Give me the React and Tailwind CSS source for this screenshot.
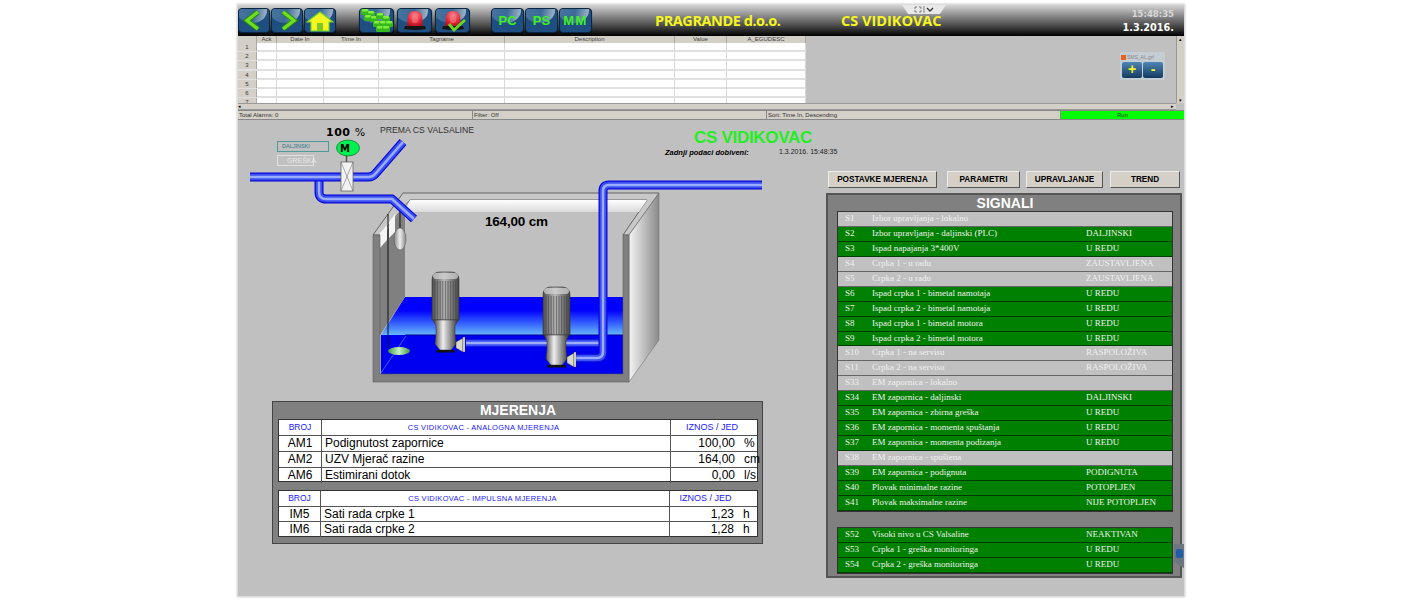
import React from "react";

const SERIF = { fontFamily: '"Liberation Serif", serif' };

function ToolBtn({ w = "w-[33px]", children }) {
  return (
    <div className={`relative ${w} h-[25px] shrink-0 rounded-[4px] border border-[#0c2540] bg-[#1f4f80] flex items-center justify-center overflow-hidden shadow-[0_1px_1px_rgba(0,0,0,0.8)]`}>
      <div className="absolute left-[-6%] right-[8%] top-[-10px] h-[24px] rounded-b-[60%] bg-[linear-gradient(100deg,#4a76a0_0%,#3a6a98_55%,#aebecb_100%)]" />
      <div className="relative flex items-center justify-center">{children}</div>
    </div>
  );
}

function TextBtn({ children, tracking }) {
  return (
    <ToolBtn>
      <span className={`text-[#3cf01e] text-[13px] font-bold whitespace-nowrap ${tracking}`} style={{ fontFamily: '"Liberation Sans", sans-serif' }}>{children}</span>
    </ToolBtn>
  );
}

function Chevron({ d }) {
  return (
    <svg width="24" height="23" viewBox="0 0 24 23">
      <path d={d} fill="none" stroke="#2c8a12" strokeWidth="5.2" />
      <path d={d} fill="none" stroke="#6fe020" strokeWidth="3.2" />
    </svg>
  );
}

function Siren({ id, check }) {
  return (
    <svg width="26" height="23" viewBox="0 0 26 23">
      <defs>
        <radialGradient id={id} cx="50%" cy="30%" r="75%">
          <stop offset="0" stopColor="#f88c94" />
          <stop offset="0.6" stopColor="#e6283a" />
          <stop offset="1" stopColor="#a81220" />
        </radialGradient>
      </defs>
      <path d="M5 17 L6 7 Q7 2 13 2 Q19 2 20 7 L21 17 Z" fill={`url(#${id})`} />
      <path d="M3 17 H23 L24 20 Q13 22 2 20 Z" fill="#141414" />
      <rect x="10" y="6" width="6" height="8" rx="2" fill="#f47a80" opacity="0.55" />
      {check && <path d="M9 15 L14 21 L25 11" fill="none" stroke="#63d820" strokeWidth="2.8" />}
    </svg>
  );
}

function Bricks() {
  const pts = [[1, 0], [7, 2], [4, 6], [10, 7], [16, 4], [22, 7], [13, 12], [19, 12], [25, 12], [16, 17], [22, 17]];
  return (
    <svg width="33" height="24" viewBox="0 0 33 24">
      {pts.map(([x, y], i) => (
        <g key={i}>
          <rect x={x} y={y} width="8" height="6" rx="1.5" fill="#36b81c" />
          <rect x={x + 1} y={y} width="6" height="2.5" rx="1" fill="#7fee3e" />
        </g>
      ))}
    </svg>
  );
}

function Cell() {
  return <div className="border-r border-[#d8d8d8]" />;
}

const GRID = "grid grid-cols-[19px_20px_47px_55px_126px_170px_52px_79px]";

function AlarmGrid() {
  const heads = ["", "Ack", "Date In", "Time In", "Tagname", "Description", "Value", "A_EGUDESC"];
  return (
    <div className="w-[568px] h-[67px] overflow-hidden text-[6px] text-[#444]">
      <div className={`${GRID} h-[7px] bg-[#d4d0c8] leading-[7px] text-center`}>
        {heads.map((h, i) => <div key={i} className="border-r border-[#aaa8a0]">{h}</div>)}
      </div>
      {[1, 2, 3, 4, 5, 6, 7].map((n) => (
        <div key={n} className={`${GRID} h-[9.2px] bg-white border-b-2 border-[#e0e0e0] leading-[8px] text-center`}>
          <div className="bg-[#d4d0c8] text-[#333] border-r border-[#aaa8a0]">{n}</div>
          {[0, 1, 2, 3, 4, 5, 6].map((c) => <Cell key={c} />)}
        </div>
      ))}
    </div>
  );
}

function Pipe({ d }) {
  return (
    <g fill="none" strokeLinejoin="round">
      <path d={d} stroke="#0808d8" strokeWidth="9" />
      <path d={d} stroke="#3a50f4" strokeWidth="6.5" />
      <path d={d} stroke="#9cacff" strokeWidth="2.5" />
    </g>
  );
}

function Pump({ x, y }) {
  const ribs = [];
  for (let i = 3; i < 26; i += 2.6) ribs.push(<line key={i} x1={x + i} x2={x + i} y1={y + 9} y2={y + 48} stroke="#444" strokeWidth="0.6" />);
  return (
    <g>
      <path d={`M${x} ${y + 8} Q${x} ${y} ${x + 8} ${y} H${x + 19} Q${x + 27} ${y} ${x + 27} ${y + 8} V${y + 48} H${x} Z`} fill="url(#steel)" stroke="#333" strokeWidth="0.6" />
      <rect x={x + 1} y={y + 1} width="25" height="6" rx="3" fill="#d0d0d0" opacity="0.75" />
      {ribs}
      <path d={`M${x + 1} ${y + 48} H${x + 26} L${x + 23} ${y + 54} V${y + 62} L${x + 24} ${y + 72} L${x + 19} ${y + 78} H${x + 8} L${x + 3} ${y + 72} L${x + 4} ${y + 62} V${y + 54} Z`} fill="url(#steel2)" stroke="#333" strokeWidth="0.5" />
      <rect x={x + 4} y={y + 78} width="19" height="2.5" rx="1" fill="#111" />
      <path d={`M${x + 24} ${y + 70} L${x + 31} ${y + 66} V${y + 80} L${x + 24} ${y + 76} Z`} fill="#d8d8d0" stroke="#333" strokeWidth="0.5" />
      <rect x={x + 31} y={y + 65} width="2" height="15" fill="#f0f0e8" stroke="#333" strokeWidth="0.4" />
    </g>
  );
}

function Diagram() {
  return (
    <svg className="block absolute inset-0" width="568" height="281" viewBox="238 120 568 281">
      <defs>
        <linearGradient id="steel" x1="0" x2="1" y1="0" y2="0">
          <stop offset="0" stopColor="#4c4c4c" />
          <stop offset="0.45" stopColor="#b8b8b8" />
          <stop offset="1" stopColor="#444" />
        </linearGradient>
        <linearGradient id="steel2" x1="0" x2="1" y1="0" y2="0">
          <stop offset="0" stopColor="#333" />
          <stop offset="0.4" stopColor="#eeeeee" />
          <stop offset="1" stopColor="#333" />
        </linearGradient>
        <linearGradient id="water" x1="0" x2="0" y1="0" y2="1">
          <stop offset="0" stopColor="#0000ff" />
          <stop offset="0.35" stopColor="#0000ff" />
          <stop offset="1" stopColor="#66b8ff" />
        </linearGradient>
        <linearGradient id="side" x1="0" x2="1" y1="0" y2="0">
          <stop offset="0" stopColor="#f4f4f4" />
          <stop offset="1" stopColor="#8a8a8a" />
        </linearGradient>
        <linearGradient id="band" x1="0" x2="0" y1="0" y2="1">
          <stop offset="0" stopColor="#ffffff" />
          <stop offset="1" stopColor="#dadada" />
        </linearGradient>
        <linearGradient id="floatG" x1="0" x2="1" y1="0" y2="0">
          <stop offset="0" stopColor="#3f9d3f" />
          <stop offset="0.5" stopColor="#c8eec8" />
          <stop offset="1" stopColor="#3f9d3f" />
        </linearGradient>
        <linearGradient id="ballG" x1="0" x2="1" y1="0" y2="0">
          <stop offset="0" stopColor="#888" />
          <stop offset="0.5" stopColor="#eee" />
          <stop offset="1" stopColor="#888" />
        </linearGradient>
      </defs>

      {/* tank */}
      <polygon points="373,235 403,193 659,193 629,235 623,235 647,200 410,200 380,235" fill="#c8c8c8" stroke="#666" strokeWidth="1" />
      <polygon points="410,200 647,200 639,212 404,212" fill="url(#band)" />
      <polygon points="629,235 659,193 659,340 629,382" fill="url(#side)" stroke="#777" strokeWidth="0.6" />
      <polygon points="405,297 623,297 623,335 381,335" fill="url(#water)" />
      <polygon points="380,240 405,205 405,297 380,335" fill="#808080" />
      <polygon points="380,233 387,225 387,240 380,248" fill="#f4f4f4" />
      <polygon points="389,222 395,214 395,232 389,238" fill="#f4f4f4" />
      <rect x="381" y="335" width="242" height="39" fill="#0000f0" />
      <line x1="405" y1="335" x2="623" y2="335" stroke="#000090" strokeWidth="1" />
      <line x1="381" y1="373" x2="406" y2="336" stroke="#4f8cff" strokeWidth="0.7" />
      <path d="M373 235 H380 V374 H623 V235 H629 V382 H373 Z" fill="#808080" stroke="#5a5a5a" strokeWidth="0.6" />

      {/* floats */}
      <line x1="388" y1="214" x2="388" y2="348" stroke="#111" strokeWidth="1" />
      <line x1="400" y1="208" x2="400" y2="230" stroke="#222" strokeWidth="1.2" />
      <ellipse cx="400" cy="239" rx="6" ry="11" fill="url(#ballG)" stroke="#555" strokeWidth="0.5" />
      <ellipse cx="399" cy="351" rx="11" ry="4" fill="url(#floatG)" />

      {/* discharge pipes */}
      <Pipe d="M466 343 H604" />
      <Pump x={432} y={272} />
      <Pipe d="M576 358 H597 Q603 358 603 352 V191 Q603 185 609 185 H762" />
      <Pump x={543} y={287} />

      {/* inlet pipes */}
      <Pipe d="M319 180 V192 Q319 199 326 199 H392 L414 219" />
      <Pipe d="M250 177 H368 Q373 177 376 173 L403 142" />

      {/* valve + motor */}
      <line x1="346.5" y1="155" x2="346.5" y2="163" stroke="#555" strokeWidth="1.5" />
      <rect x="341" y="162" width="12" height="29" fill="#f2f2f2" stroke="#666" strokeWidth="0.8" />
      <path d="M341 162 L353 191 M353 162 L341 191" stroke="#777" strokeWidth="0.6" />
      <ellipse cx="348" cy="148" rx="11.5" ry="8" fill="#00f050" stroke="#0a5a20" strokeWidth="0.6" />
    </svg>
  );
}

function MRow({ cols, a, b, c, d, h = "h-[16px]", last }) {
  return (
    <div className={`grid ${cols} ${h} text-[12px] text-black leading-[15px] ${last ? "" : "border-b border-[#555]"}`}>
      <div className="border-r border-[#555] text-center">{a}</div>
      <div className="border-r border-[#555] pl-[3px]">{b}</div>
      <div className="flex">
        <span className="w-[64px] text-right">{c}</span>
        <span className="pl-[9px]">{d}</span>
      </div>
    </div>
  );
}

function MHead({ cols, a, b, c, pc }) {
  return (
    <div className={`grid ${cols} h-[16px] text-[8.5px] text-[#2020ff] leading-[15px] border-b border-[#555]`}>
      <div className="border-r border-[#555] text-center">{a}</div>
      <div className="border-r border-[#555] text-center text-[7.5px] tracking-[0.3px] pr-[25px]">{b}</div>
      <div className={`text-center text-[9px] whitespace-nowrap ${pc}`}>{c}</div>
    </div>
  );
}

function Mjerenja() {
  const c1 = "grid-cols-[43px_349px_1fr]";
  const c2 = "grid-cols-[42px_349px_1fr]";
  return (
    <div className="ml-[34px] w-[491px] h-[143px] bg-[#808080] border border-[#444] pl-[5px]">
      <div className="h-[17px] w-[480px] text-center text-white font-bold text-[14px] leading-[17px]">MJERENJA</div>
      <div className="w-[480px] bg-white border border-[#333] h-[63px]">
        <MHead cols={c1} a="BROJ" b="CS VIDIKOVAC - ANALOGNA MJERENJA" c="IZNOS / JED" pc="pr-[4px]" />
        <MRow cols={c1} a="AM1" b="Podignutost zapornice" c="100,00" d="%" />
        <MRow cols={c1} a="AM2" b="UZV Mjerač razine" c="164,00" d="cm" />
        <MRow cols={c1} a="AM6" b="Estimirani dotok" c="0,00" d="l/s" h="h-[14px]" last />
      </div>
      <div className="h-[8px]" />
      <div className="w-[480px] bg-white border border-[#333] h-[47px]">
        <MHead cols={c2} a="BROJ" b="CS VIDIKOVAC - IMPULSNA MJERENJA" c="IZNOS / JED" pc="pr-[16px]" />
        <MRow cols={c2} a="IM5" b="Sati rada crpke 1" c="1,23" d="h" h="h-[15px]" />
        <MRow cols={c2} a="IM6" b="Sati rada crpke 2" c="1,28" d="h" h="h-[14px]" last />
      </div>
    </div>
  );
}

const SIG = [
  ["S1", "Izbor upravljanja - lokalno", "", 0],
  ["S2", "Izbor upravljanja - daljinski (PLC)", "DALJINSKI", 1],
  ["S3", "Ispad napajanja 3*400V", "U REDU", 1],
  ["S4", "Crpka 1 - u radu", "ZAUSTAVLJENA", 0],
  ["S5", "Crpka 2 - u radu", "ZAUSTAVLJENA", 0],
  ["S6", "Ispad crpka 1 - bimetal namotaja", "U REDU", 1],
  ["S7", "Ispad crpka 2 - bimetal namotaja", "U REDU", 1],
  ["S8", "Ispad crpka 1 - bimetal motora", "U REDU", 1],
  ["S9", "Ispad crpka 2 - bimetal motora", "U REDU", 1],
  ["S10", "Crpka 1 - na servisu", "RASPOLOŽIVA", 0],
  ["S11", "Crpka 2 - na servisu", "RASPOLOŽIVA", 0],
  ["S33", "EM zapornica - lokalno", "", 0],
  ["S34", "EM zapornica - daljinski", "DALJINSKI", 1],
  ["S35", "EM zapornica - zbirna greška", "U REDU", 1],
  ["S36", "EM zapornica - momenta spuštanja", "U REDU", 1],
  ["S37", "EM zapornica - momenta podizanja", "U REDU", 1],
  ["S38", "EM zapornica - spuštena", "", 0],
  ["S39", "EM zapornica - podignuta", "PODIGNUTA", 1],
  ["S40", "Plovak minimalne razine", "POTOPLJEN", 1],
  ["S41", "Plovak maksimalne razine", "NIJE POTOPLJEN", 1],
];
const SIG2 = [
  ["S52", "Visoki nivo u CS Valsaline", "NEAKTIVAN", 1],
  ["S53", "Crpka 1 - greška monitoringa", "U REDU", 1],
  ["S54", "Crpka 2 - greška monitoringa", "U REDU", 1],
];

function SigRow({ r }) {
  const on = r[3];
  return (
    <div className={`grid grid-cols-[34px_214px_1fr] h-[14.95px] text-[9px] leading-[13.5px] border-b ${on ? "bg-[#008000] text-[#f0f0f0] border-[#003c00]" : "bg-[#c0c0c0] text-[#f0f0f0] border-[#666]"}`} style={SERIF}>
      <span className="pl-[7px]">{r[0]}</span>
      <span>{r[1]}</span>
      <span className="whitespace-nowrap">{r[2]}</span>
    </div>
  );
}

function ActionBtn({ w, children }) {
  return (
    <div className={`${w} h-[17px] shrink-0 bg-[#d4d0c8] text-black text-[8.2px] font-bold text-center leading-[16px] border border-t-[#eee] border-l-[#eee] border-r-[#555] border-b-[#555] whitespace-nowrap`}>
      {children}
    </div>
  );
}

export default function App() {
  return (
    <div className="min-h-[600px] bg-white flex pl-[237px] pt-[4px]" style={{ fontFamily: '"Liberation Sans", sans-serif' }}>
      <div className="relative w-[948px] h-[593px] bg-[#c0c0c0] border border-[#dcdcdc] shadow-[0_0_2px_#bbb] overflow-hidden">
        {/* top bar */}
        <div className="relative h-[31px] flex items-center bg-[linear-gradient(180deg,#d4d4d4_0%,#8a8a8a_35%,#444_70%,#000_100%)]">
          <div className="flex gap-[1px] shrink-0">
            <ToolBtn w="w-[32px]"><Chevron d="M16 3 L5 11.5 L16 20" /></ToolBtn>
            <ToolBtn w="w-[32px]"><Chevron d="M8 3 L19 11.5 L8 20" /></ToolBtn>
            <ToolBtn w="w-[32px]">
              <svg width="28" height="22" viewBox="0 0 28 22">
                <path d="M14 2 L27 12 H23 V21 H5 V12 H1 Z" fill="#f7f520" stroke="#6fd62a" strokeWidth="1.2" />
                <rect x="11" y="13" width="6" height="8" fill="#7bc82a" />
              </svg>
            </ToolBtn>
          </div>
          <div className="flex gap-[3px] ml-[23px] shrink-0">
            <ToolBtn w="w-[35px]"><Bricks /></ToolBtn>
            <ToolBtn w="w-[35px]"><Siren id="sirenA" /></ToolBtn>
            <ToolBtn w="w-[35px]"><Siren id="sirenB" check /></ToolBtn>
          </div>
          <div className="flex gap-[1px] ml-[21px] shrink-0">
            <TextBtn tracking="">PC</TextBtn>
            <TextBtn tracking="">PS</TextBtn>
            <TextBtn tracking="tracking-[1.5px]">MM</TextBtn>
          </div>
          <div className="ml-[63px] w-[186px] text-[#f5f51e] font-bold text-[14.5px] tracking-[-0.45px] whitespace-nowrap" style={{ fontFamily: '"Open Sans", sans-serif' }}>PRAGRANDE d.o.o.</div>
          <div className="text-[#f5f51e] font-bold text-[14.5px] whitespace-nowrap" style={{ fontFamily: '"Open Sans", sans-serif' }}>CS VIDIKOVAC</div>
          <div className="ml-auto pr-[10px] text-right font-bold leading-[13px]" style={{ fontFamily: '"DejaVu Sans", sans-serif' }}>
            <div className="text-[8.5px] text-[#d8d8d8]">15:48:35</div>
            <div className="text-[9.7px] text-white">1.3.2016.</div>
          </div>
          <div className="absolute left-[664px] top-0 w-[44px] h-[9px] bg-[#e8e8e8] [clip-path:polygon(0_0,100%_0,86%_100%,14%_100%)] flex items-center justify-center">
            <svg width="20" height="7" viewBox="0 0 20 7">
              <path d="M1 1h2M1 1v2M7 1H5M7 1v2M1 6h2M1 6V4M7 6H5M7 6V4M10 0v7" stroke="#666" strokeWidth="0.8" fill="none" />
              <path d="M13 2l3 3 3-3" stroke="#333" strokeWidth="1.3" fill="none" />
            </svg>
          </div>
        </div>

        {/* alarm area */}
        <div className="flex h-[74px]">
          <div className="flex flex-col flex-1">
            <AlarmGrid />
            <div className="h-[7px] bg-[#d4d0c8] border-y border-[#999] flex justify-between text-[5px] leading-[5px] text-black">
              <span>◂</span>
              <span className="pr-[2px]">▸</span>
            </div>
          </div>
          <div className="w-[8px] h-[67px] bg-[#d4d0c8] border-l border-[#999] flex flex-col justify-between items-center text-[5px] leading-[6px] text-black">
            <span>▴</span>
            <span>▾</span>
          </div>
        </div>

        {/* status bar */}
        <div className="flex h-[10px] text-[6px] leading-[9px] text-[#333] border-y border-[#888] bg-[#d4d0c8]">
          <div className="w-[235px] pl-[1px] border-r border-[#888]">Total Alarms: 0</div>
          <div className="w-[294px] pl-[1px] border-r border-[#888]">Filter: Off</div>
          <div className="w-[294px] pl-[1px] border-r border-[#888]">Sort: Time In, Descending</div>
          <div className="flex-1 bg-[#00ff00] text-center">Run</div>
        </div>

        {/* SMS widget over alarm area */}
        <div className="absolute left-[882px] top-[47px] w-[45px] h-[28px] bg-[#c4ccd4] rounded-[2px] p-[1px]">
          <div className="flex items-center gap-[1px] h-[9px] text-[5px] text-[#888] whitespace-nowrap">
            <span className="w-[5px] h-[5px] bg-[#e8641e] inline-block" />
            <span>SMS_AL.grf</span>
          </div>
          <div className="flex justify-center gap-[1px]">
            <div className="w-[20px] h-[16px] rounded-[2px] bg-[linear-gradient(180deg,#4f86b5,#143a60)] text-[#f5f51e] font-bold text-[14px] leading-[15px] text-center">+</div>
            <div className="w-[20px] h-[16px] rounded-[2px] bg-[linear-gradient(180deg,#4f86b5,#143a60)] text-[#f5f51e] font-bold text-[14px] leading-[14px] text-center">-</div>
          </div>
        </div>

        {/* main */}
        <div className="flex">
          <div className="w-[568px] shrink-0">
            <div className="relative h-[281px]">
              <Diagram />
              <span className="absolute left-[88px] top-[5px] text-black font-bold text-[11px] tracking-[0.5px] whitespace-nowrap" style={{ fontFamily: '"DejaVu Sans", sans-serif' }}>100 <span className="font-normal">%</span></span>
              <span className="absolute left-[102px] top-[21px] text-black font-bold text-[10px]" style={{ fontFamily: '"DejaVu Sans", sans-serif' }}>M</span>
              <span className="absolute left-[142px] top-[4px] text-[#333] text-[8.7px] whitespace-nowrap">PREMA CS VALSALINE</span>
              <div className="absolute left-[39px] top-[21px] w-[52px] h-[11px] border border-[#4f9a9a] text-[#2c7a8a] text-[5.5px] leading-[9px] pl-[4px]">DALJINSKI</div>
              <div className="absolute left-[39px] top-[35px] w-[37px] h-[11px] border border-[#e0e0e0] text-[#e8e8e8] text-[7px] leading-[9px] pl-[9px]">GREŠKA</div>
              <span className="absolute left-[247px] top-[92px] text-black font-bold text-[13.5px] tracking-[-0.2px] whitespace-nowrap">164,00 cm</span>
              <span className="absolute left-[456px] top-[6px] text-[#22ee22] font-bold text-[17px] tracking-[-0.3px] whitespace-nowrap leading-[24px]">CS VIDIKOVAC</span>
              <span className="absolute left-[427px] top-[27px] text-black italic font-bold text-[7.5px] whitespace-nowrap">Zadnji podaci dobiveni:</span>
              <span className="absolute left-[541px] top-[27px] text-[#222] text-[7px] whitespace-nowrap">1.3.2016. 15:48:35</span>
            </div>
            <Mjerenja />
          </div>
          <div className="flex-1 pl-[20px] pt-[51px]">
            <div className="flex gap-[10px] pl-[2px]">
              <ActionBtn w="w-[109px]">POSTAVKE MJERENJA</ActionBtn>
              <div className="flex gap-[6px]">
                <ActionBtn w="w-[73px]">PARAMETRI</ActionBtn>
                <ActionBtn w="w-[77px]">UPRAVLJANJE</ActionBtn>
                <ActionBtn w="w-[70px] ml-[1px]">TREND</ActionBtn>
              </div>
            </div>
            <div className="mt-[5px] w-[356px] h-[385px] bg-[#808080] border-2 border-[#555] pl-[9px]">
              <div className="h-[16px] w-[336px] text-center text-white font-bold text-[14px] leading-[17px]">SIGNALI</div>
              <div className="w-[336px] border border-[#333]">
                {SIG.map((r) => <SigRow key={r[0]} r={r} />)}
              </div>
              <div className="h-[15px]" />
              <div className="w-[336px] border border-[#333]">
                {SIG2.map((r) => <SigRow key={r[0]} r={r} />)}
              </div>
            </div>
          </div>
        </div>

        {/* side tab */}
        <div className="absolute left-[936px] top-[539px] w-[11px] h-[25px] bg-[#6d7680] [clip-path:polygon(0_0,100%_0,100%_100%,0_70%)] flex justify-center pt-[5px]">
          <div className="w-[7px] h-[9px] rounded-[2px] bg-[#1f5fa8]" />
        </div>
      </div>
    </div>
  );
}
